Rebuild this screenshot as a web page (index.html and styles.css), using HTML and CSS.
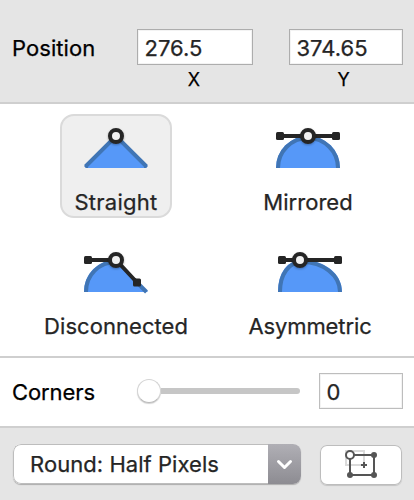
FILE: index.html
```html
<!DOCTYPE html>
<html lang="en">
<head>
<meta charset="utf-8">
<title>Point inspector</title>
<link rel="stylesheet" href="styles.css">
</head>
<body>
<main class="inspector">
  <section class="position">
    <span class="label">Position</span>
    <label class="coordinate coordinate-x"><span class="field"><span class="value-x">276.5</span></span><span class="axis">X</span></label>
    <label class="coordinate coordinate-y"><span class="field"><span class="value-y">374.65</span></span><span class="axis">Y</span></label>
  </section>

  <section class="modes">
    <div class="mode selected">
      <svg class="mode-icon" viewBox="0 0 80 58">
        <path class="fill" d="M40 20L71 52H9Z"/>
        <path class="edge" d="M9.500 50.500L40 20L70.500 50.500"/>
        <path class="edge-end" d="M8 50L10 52H12L12 48ZM72 50L70 52H68V48Z"/>
        <circle class="node" cx="40" cy="20" r="6"/>
      </svg>
      <span class="mode-name straight">Straight</span>
    </div>
    <div class="mode">
      <svg class="mode-icon" viewBox="0 0 80 58">
        <path class="fill" d="M8 52A32 32 0 0 1 72 52Z"/>
        <path class="edge" d="M10 52A30 30 0 0 1 70 52"/>
        <path class="handle" d="M12 20H68"/>
        <rect class="grip" x="8" y="16" width="8" height="8" rx="1.5"/>
        <rect class="grip" x="64" y="16" width="8" height="8" rx="1.5"/>
        <circle class="node" cx="40" cy="20" r="6"/>
      </svg>
      <span class="mode-name mirrored">Mirrored</span>
    </div>
    <div class="mode">
      <svg class="mode-icon" viewBox="0 0 80 58">
        <path class="fill" d="M8 52C8 34 22 20 40 20L72 52Z"/>
        <path class="edge" d="M10 52C10 35 23 22 40 22"/>
        <path class="edge" d="M58 39.500L70.500 52"/>
        <path class="handle" d="M12 20H40L61 42.500"/>
        <rect class="grip" x="8" y="16" width="8" height="8" rx="1.5"/>
        <rect class="grip" x="57" y="38.500" width="8" height="8" rx="1.5"/>
        <circle class="node" cx="40" cy="20" r="6"/>
      </svg>
      <span class="mode-name disconnected">Disconnected</span>
    </div>
    <div class="mode asymmetric-mode">
      <svg class="mode-icon" viewBox="0 0 80 58">
        <path class="fill" d="M8 52C8 32 18 20 32 20C55 20 72 34 72 52Z"/>
        <path class="edge" d="M10 52C10 34 19 22 32 22C53 22 70 35 70 52"/>
        <path class="handle" d="M12 20H68"/>
        <rect class="grip" x="8" y="16" width="8" height="8" rx="1.5"/>
        <rect class="grip" x="64" y="16" width="8" height="8" rx="1.5"/>
        <circle class="node" cx="30" cy="20" r="6"/>
      </svg>
      <span class="mode-name asymmetric">Asymmetric</span>
    </div>
  </section>

  <section class="corners">
    <span class="label corners-label">Corners</span>
    <div class="slider"><span class="thumb"></span><span class="track"></span></div>
    <span class="field corner-field">0</span>
  </section>

  <footer class="actions">
    <div class="select">
      <span class="select-text"><span class="rounding">Round: Half Pixels</span></span>
      <span class="select-arrow"><svg width="33" height="40" viewBox="0 0 33 40"><path d="M10.500 17.500L16.500 23.500L22.500 17.500"/></svg></span>
    </div>
    <button class="bounds-button" aria-label="Edit bounds">
      <svg width="82" height="40" viewBox="0 0 82 40">
        <path class="ghost" d="M26 6H44V20H26Z"/>
        <path class="bounds" d="M30 10H54V30H30Z"/>
        <path class="bounds" d="M41 20H47M44 17V23"/>
        <circle class="corner" cx="54" cy="10" r="3"/>
        <circle class="corner" cx="30" cy="30" r="3"/>
        <circle class="corner" cx="54" cy="30" r="3"/>
        <circle class="origin" cx="30" cy="10" r="4"/>
      </svg>
    </button>
  </footer>
</main>
</body>
</html>
```

FILE: styles.css
```css
* { box-sizing: border-box; }

body {
  margin: 0;
  font: 22px/28px Inter, "Liberation Sans", sans-serif;
  color: #252525;
  -webkit-text-stroke: 0.25px currentColor;
}

.inspector {
  display: flex;
  flex-direction: column;
  width: 414px;
  height: 500px;
  background: #fff;
}

svg { display: block; }

.position {
  display: flex;
  height: 104px;
  padding: 29px 11px 0 12px;
  background: #e5e5e5;
  border-bottom: 2px solid #cfcfcf;
}

.label {
  width: 125px;
  padding-top: 5px;
  color: #000;
  letter-spacing: 0.05px;
}
.corners-label { letter-spacing: -0.1px; }

.coordinate { display: flex; flex-direction: column; align-items: center; }
.coordinate-x { width: 116px; margin-right: 36px; }
.coordinate-y { width: 114px; }

.field {
  width: 100%;
  height: 36px;
  padding: 4px 6.5px;
  background: #fff;
  border: 1px solid #adadad;
  box-shadow: inset 0 0 0 1px #f3f3f3;
}

.axis { margin-top: 4px; font-size: 18px; line-height: 22px; color: #000; }
.coordinate-y .axis { margin-right: 5px; }
.coordinate-x .axis { margin-right: 2px; }

.modes {
  display: grid;
  grid-template-columns: 112px 112px;
  grid-auto-rows: 104px;
  gap: 20px 80px;
  height: 254px;
  padding: 10px 0 0 60px;
  border-bottom: 2px solid #cfcfcf;
}

.mode {
  display: flex;
  flex-direction: column;
  align-items: center;
  border: 2px solid transparent;
  border-radius: 14px;
}

.mode.selected { background: #efefef; border-color: #dadada; }
.asymmetric-mode { margin: 0 -2px 0 2px; }
.mode-icon { flex: none; width: 80px; height: 58px; }
.mode-name { margin-top: 14px; white-space: nowrap; }
.straight { letter-spacing: 0.25px; }
.mirrored { letter-spacing: 0.05px; }
.disconnected { letter-spacing: 0.05px; }
.asymmetric { letter-spacing: -0.1px; }

.fill { fill: #5698f8; }
.edge { fill: none; stroke: #4075b5; stroke-width: 4; }
.edge-end { fill: #4075b5; }
.handle { fill: none; stroke: #252525; stroke-width: 4; }
.grip { fill: #252525; }
.node { fill: #f1f1f1; stroke: #252525; stroke-width: 4; filter: drop-shadow(0 1px 1px rgb(0 0 0 / 30%)); }

.corners {
  display: flex;
  height: 70px;
  padding: 15px 11px 0 12px;
  border-bottom: 2px solid #cfcfcf;
}

.slider { display: flex; align-items: center; width: 163px; height: 36px; margin-right: 19px; }
.thumb {
  flex: none;
  width: 24px;
  height: 24px;
  border: 1px solid #d4d4d4;
  border-bottom-color: #bababa;
  border-radius: 50%;
  background: #fff;
  box-shadow: 0 1px 1px rgb(0 0 0 / 18%);
}
.track { flex: 1; height: 6px; border-radius: 0 3px 3px 0; background: #c6c6c6; }
.corner-field { width: 84px; border-color: #bdbdbd; }

.actions {
  display: flex;
  flex: 1;
  padding: 16px 12px 0 13px;
  background: #e5e5e5;
}

.select {
  display: flex;
  width: 288px;
  height: 40px;
  margin-right: 19px;
  overflow: hidden;
  border-radius: 8px;
  background: #fff;
  box-shadow: 0 1px 1px rgb(0 0 0 / 25%);
}
.select-text {
  width: 255px;
  padding: 5px 0 0 16px;
  border: 1px solid #bdbdbd;
  border-right: 0;
  border-radius: 8px 0 0 8px;
  white-space: nowrap;
  letter-spacing: 0.05px;
}
.select-arrow { width: 33px; background: linear-gradient(#b0afb5, #8d8c92); }
.select-arrow path { fill: none; stroke: #fff; stroke-width: 3; stroke-linecap: round; stroke-linejoin: round; }

.bounds-button {
  width: 82px;
  height: 40px;
  margin-top: 1px;
  padding: 0;
  border: 0;
  border-radius: 7px;
  background: #fff;
  box-shadow: inset 0 0 0 1px #bdbdbd, 0 1px 1px rgb(0 0 0 / 15%);
}
.ghost { fill: none; stroke: #dadada; stroke-width: 2; }
.bounds { fill: none; stroke: #555; stroke-width: 2; }
.corner { fill: #555; }
.origin { fill: #fff; stroke: #555; stroke-width: 2; }
```
